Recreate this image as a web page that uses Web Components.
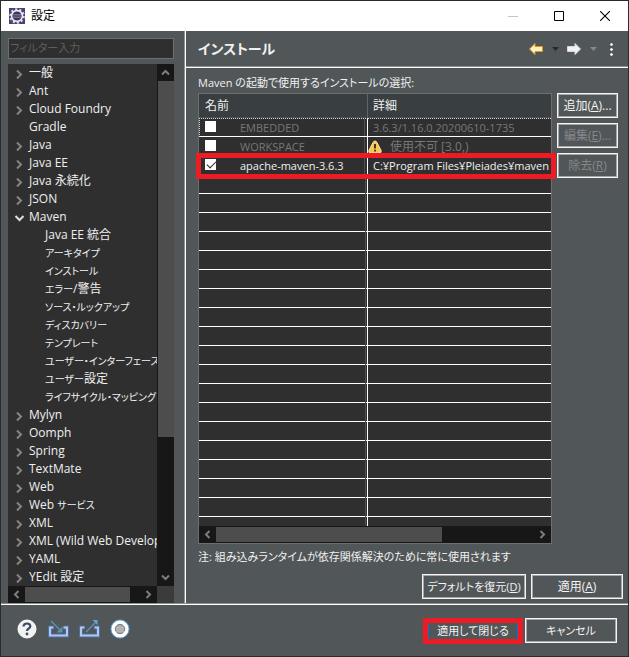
<!DOCTYPE html>
<html lang="ja">
<head>
<meta charset="utf-8">
<title>設定</title>
<style>
  body {
    margin: 0;
    background: #2b2b2b;
    color: #f0f0f0;
    font: 12px/18px "Open Sans", "Noto Sans CJK JP", sans-serif;
    font-feature-settings: "palt";
  }
</style>
</head>
<body>
<preferences-window></preferences-window>
<script>
const define = (name, html, setup) => {
  const tpl = document.createElement('template');
  tpl.innerHTML = '<style>*{box-sizing:border-box}:host{box-sizing:border-box}</style>' + html;
  customElements.define(name, class extends HTMLElement {
    constructor() {
      super();
      this.attachShadow({ mode: 'open' }).append(tpl.content.cloneNode(true));
    }
    connectedCallback() { if (setup) setup(this, this.shadowRoot); }
  });
};

/* Title bar with application icon and window controls */
define('title-bar', `
<style>
  :host { display: flex; align-items: center; height: 30px; background: #fff; color: #000; padding-left: 8px; }
  .name { flex: 1; margin-left: 6px; }
  button { width: 46px; height: 30px; border: 0; padding: 0; background: none; display: grid; place-items: center; }
</style>
<svg width="16" height="16" viewBox="0 0 16 16">
  <rect width="16" height="16" fill="#4c3d77"/>
  <circle cx="8" cy="8" r="6.8" fill="none" stroke="#d8d4e2" stroke-width="2" stroke-dasharray="2.2 2.07"/>
  <circle cx="8" cy="8" r="5.4" fill="#3c3558" stroke="#eeecf2" stroke-width="1.6"/>
  <path d="M4 6.5h8M3.6 8h8.8M4 9.5h8" stroke="#8b88a8" stroke-width=".7"/>
</svg>
<span class="name"><slot></slot></span>
<button aria-label="最小化"><svg width="10" height="10"><path d="M0 5.5h10" stroke="#c4c4c4"/></svg></button>
<button aria-label="最大化"><svg width="10" height="10"><path d="M.5.5h9v9h-9z" fill="none" stroke="#000"/></svg></button>
<button aria-label="閉じる"><svg width="10" height="10"><path d="M0 0l10 10M10 0L0 10" stroke="#000" stroke-width="1.1"/></svg></button>
`);

/* Scroll bar: size = thumb share of the track in percent */
define('scroll-bar', `
<style>
  :host { display: flex; background: #171717; width: 17px; flex-direction: column; }
  :host([horizontal]) { width: auto; height: 17px; flex-direction: row; }
  button { flex: none; width: 17px; height: 17px; padding: 0; border: 0; background: none; display: grid; place-items: center; }
  .track { flex: 1; display: flex; flex-direction: inherit; padding: 0 0 0 1px; }
  :host([horizontal]) .track { padding: 1px 0; }
  .thumb { background: #4d4d4d; flex: none; }
  path { fill: none; stroke: #7d7d7d; stroke-width: 2; }
  :host([horizontal]) svg { transform: rotate(-90deg); }
</style>
<button aria-label="戻る"><svg width="9" height="9"><path d="M1 6.5l3.500-3.500 3.500 3.500"/></svg></button>
<div class="track"><div class="thumb"></div></div>
<button aria-label="進む"><svg width="9" height="9"><path d="M1 2.500l3.500 3.500 3.500-3.500"/></svg></button>
`, (el, root) => {
  const side = el.hasAttribute('horizontal') ? 'width' : 'height';
  root.querySelector('.thumb').style[side] = el.getAttribute('size') + '%';
});

/* Framed push button */
define('push-button', `
<style>
  :host { display: block; }
  button { width: 100%; height: 25px; padding: 0; border: 1px solid #f4f4f4; outline: 1px solid #a6a6a6; outline-offset: -2px;
    background: #515658; color: #f4f4f4; font: inherit; font-feature-settings: inherit; white-space: nowrap; }
  button:disabled { color: #85888a; }
  :host([compact]) { font-size: 11px; }
  :host([primary]) button { display: block; border: solid #0a74d1; border-width: 0 1px; outline: 0; height: 16px; line-height: 16px; }
  :host([primary]) { border: 5px solid #ed1c24; }
</style>
<button><slot></slot></button>
`, (el, root) => { root.querySelector('button').disabled = el.hasAttribute('disabled'); });

/* One line of the category tree: state = open | closed | leaf */
define('tree-row', `
<style>
  :host { display: flex; align-items: center; height: 18px; padding-left: 7px; white-space: nowrap; }
  :host([level="2"]) { padding-left: 23px; }
  svg { width: 9px; height: 9px; margin: 2px 5px 0 0; flex: none; }
  path { fill: none; stroke: #858585; stroke-width: 2; display: none; }
  :host([state="closed"]) .closed { display: inline; }
  :host([state="open"]) .open { display: inline; stroke: #dcdcdc; }
  span { line-height: 18px; }
  ::slotted(small) { font-size: 10px; }
</style>
<svg viewBox="0 0 9 9"><path class="closed" d="M2 .5l4 4-4 4"/><path class="open" d="M.5 2l4 4 4-4"/></svg><span><slot></slot></span>
`, el => {
  el.setAttribute('role', 'treeitem');
});

/* Filter box above the category tree */
define('category-pane', `
<style>
  :host { display: flex; flex-direction: column; padding: 7px 11px 1px 7px; border-right: 1px solid #fff; box-shadow: inset -1px 0 #8e9090; }
  input { width: 100%; height: 21px; border: 1px solid #6e6e6e; background: #2f2f2f; color: #f0f0f0; font: inherit; font-size: 11px;
    font-feature-settings: inherit; padding: 0 1px 3px; margin: 0 0 5px; border-radius: 0; outline: 0; }
  input::placeholder { color: #5e5e5e; opacity: 1; }
  .box { flex: 1; display: grid; grid-template: minmax(0,1fr) 17px / minmax(0,1fr) 17px; background: #3b3b3b; }
  .tree { background: #2f2f2f; overflow: hidden; }
</style>
<input type="text" placeholder="フィルター入力" aria-label="フィルター入力">
<div class="box">
  <div class="tree" role="tree"></div>
  <scroll-bar size="73"></scroll-bar>
  <scroll-bar horizontal size="91"></scroll-bar>
</div>
`, (el, root) => {
  const kids = ['Java EE 統合', 'アーキタイプ', 'インストール', 'エラー/警告', 'ソース・ルックアップ', 'ディスカバリー', 'テンプレート', 'ユーザー・インターフェース', 'ユーザー設定', 'ライフサイクル・マッピング'];
  const top = ['一般', 'Ant', 'Cloud Foundry', 'Gradle', 'Java', 'Java EE', 'Java 永続化', 'JSON', 'Maven', 'Mylyn', 'Oomph', 'Spring', 'TextMate', 'Web', 'Web サービス', 'XML', 'XML (Wild Web Develop', 'YAML', 'YEdit 設定'];
  const tree = root.querySelector('.tree');
  const add = (text, state, level) => {
    const row = document.createElement('tree-row');
    row.setAttribute('state', state);
    row.setAttribute('level', level);
    /* katakana runs are set smaller than kanji and Latin */
    row.innerHTML = text.replace(/[\u30a0-\u30ff]+/g, '<small>$&</small>');
    tree.append(row);
  };
  for (const t of top) {
    add(t, t === 'Gradle' ? 'leaf' : t === 'Maven' ? 'open' : 'closed', 1);
    if (t === 'Maven') kids.forEach(k => add(k, 'leaf', 2));
  }
});

/* Page heading with history navigation */
define('page-header', `
<style>
  :host { display: flex; align-items: center; height: 37px; padding: 0 8px 0 12px; border-bottom: 1px solid #fff; box-shadow: inset 0 -1px #8e9090; }
  h1 { flex: 1; margin: 0; font-size: 14px; line-height: 20px; font-weight: 700; }
  button { border: 0; background: none; padding: 0; height: 20px; display: grid; place-items: center; }
  .arrow { width: 18px; } .drop { width: 20px; } .more { width: 17px; }
</style>
<h1><slot></slot></h1>
<button class="arrow" aria-label="戻る"><svg width="16" height="14"><path d="M1.500 7L7 1.500v3h7.500v5H7v3z" fill="#fff3c0" stroke="#dc9620" stroke-linejoin="round"/></svg></button>
<button class="drop" aria-label="戻る履歴"><svg width="7" height="4"><path d="M0 0h7L3.500 4z" fill="#292929"/></svg></button>
<button class="arrow" aria-label="進む"><svg width="16" height="14"><path d="M14.500 7L9 1.500v3H1.500v5H9v3z" fill="#f2f2f2" stroke="#d8d8d8" stroke-linejoin="round"/></svg></button>
<button class="drop" aria-label="進む履歴"><svg width="7" height="4"><path d="M0 0h7L3.500 4z" fill="#85888a"/></svg></button>
<button class="more" aria-label="メニュー"><svg width="5" height="15" fill="#fff" stroke="#303030" stroke-width=".5"><circle cx="2.500" cy="2.500" r="1.700"/><circle cx="2.500" cy="7.500" r="1.700"/><circle cx="2.500" cy="12.500" r="1.700"/></svg></button>
`);

/* Table of Maven runtimes */
define('runtime-table', `
<style>
  :host { display: flex; flex-direction: column; border: 1px solid #6e6e6e; background: #2f2f2f; position: relative; min-width: 0; }
  table { width: 100%; border-collapse: separate; border-spacing: 0; table-layout: fixed; }
  col.name { width: 169px; }
  th { height: 24px; padding: 0 0 0 5px; text-align: left; font-weight: 400; background: #393e40; border-bottom: 1px solid #4b4f51; }
  th:first-child { border-right: 1px solid #606466; padding-left: 6px; }
  td { height: 19px; padding: 2px 0 0 5px; font-size: 11px; line-height: 16px; white-space: nowrap; overflow: hidden; border-bottom: 1px solid #fff; }
  td:first-child { border-right: 1px solid #fff; box-shadow: inset -2px 0 #2f2f2f, inset -3px 0 #4b4f51; padding-left: 6px; }
  tr.off td { color: #777; }
  label { display: flex; align-items: center; }
  input { appearance: none; width: 11px; height: 11px; margin: 0 24px 4px 0; background: #fff; flex: none; }
  input:checked { display: grid; }
  input:checked::after { content: ""; width: 8px; height: 4px; margin: 2px; border: solid #222; border-width: 0 0 1px 1px; rotate: -45deg; }
  tr.focus td { border-top: 1px dotted #ddd; padding-top: 1px; }
  tr.focus td:first-child { border-left: 1px dotted #ddd; padding-left: 5px; }
  .warn { display: flex; align-items: center; gap: 8px; margin-left: -5px; font-size: 12px; }
  .rest { flex: 1; background: linear-gradient(90deg, #0000 166px, #4b4f51 166px 167px, #0000 167px 168px, #fff 168px 169px, #0000 169px),
    repeating-linear-gradient(#0000 0 18px, #fff 18px 19px); }
  .mark { position: absolute; left: -3px; right: -5px; top: 59px; height: 26px; border: 5px solid #ed1c24; pointer-events: none; }
</style>
<table>
  <colgroup><col class="name"><col></colgroup>
  <thead><tr><th>名前</th><th>詳細</th></tr></thead>
  <tbody>
    <tr class="off focus"><td><label><input type="checkbox">EMBEDDED</label></td><td>3.6.3/1.16.0.20200610-1735</td></tr>
    <tr class="off"><td><label><input type="checkbox">WORKSPACE</label></td><td><div class="warn"><svg width="14" height="14" viewBox="0 0 14 14"><path d="M7 1Q8.200 1 8.800 2.200L13.200 10.500Q13.500 13 11.800 13H2.200Q.5 13 .8 10.500L5.200 2.200Q5.800 1 7 1z" fill="#f8c750" stroke="#f8e2b0"/><path d="M7 4v4.500M7 9.700v1.800" stroke="#3a2a10" stroke-width="1.800"/></svg><span>使用不可 [3.0,)</span></div></td></tr>
    <tr><td><label><input type="checkbox" checked>apache-maven-3.6.3</label></td><td>C:¥Program Files¥Pleiades¥maven</td></tr>
  </tbody>
</table>
<div class="rest"></div>
<scroll-bar horizontal size="71"></scroll-bar>
<div class="mark"></div>
`);

/* Bottom bar */
define('dialog-footer', `
<style>
  :host { display: flex; align-items: center; height: 52px; padding: 0 11px 0 16px; border-top: 1px solid #fff; box-shadow: 0 -1px #8e9090; }
  .icons { flex: 1; display: flex; gap: 10px; padding-bottom: 3px; }
  .icons button { width: 21px; height: 20px; padding: 0; border: 0; background: none; }
  svg { display: block; }
  push-button { width: 92px; margin-left: 2px; }
  push-button[primary] { width: 100px; margin: 0; }
</style>
<div class="icons">
  <button aria-label="ヘルプ"><svg width="20" height="20"><circle cx="10" cy="10" r="9" fill="#f2f2f0" stroke="#fff"/><path d="M6.500 7.500Q6.700 4.500 10 4.500T13.300 7.300Q13.300 8.600 11.700 9.500T10 12" fill="none" stroke="#3c4a66" stroke-width="2.200"/><circle cx="10" cy="15" r="1.400" fill="#3c4a66"/></svg></button>
  <button aria-label="インポート"><svg width="21" height="20"><path d="M5.500 8.500H2V16.500H19V8.500H15.500" fill="none" stroke="#4a6da8" stroke-width="4"/><path d="M5.500 8.500H2V16.500H19V8.500H15.500" fill="none" stroke="#b4c8e8" stroke-width="2"/><path d="M3 2l9 9" stroke="#5594b8" stroke-width="1.400"/><path d="M14.500 7.500v6h-6z" fill="#5594b8"/></svg></button>
  <button aria-label="エクスポート"><svg width="21" height="20"><path d="M5.500 8.500H2V16.500H19V8.500H15.500" fill="none" stroke="#4a6da8" stroke-width="4"/><path d="M5.500 8.500H2V16.500H19V8.500H15.500" fill="none" stroke="#b4c8e8" stroke-width="2"/><path d="M7 13L17 3" stroke="#5594b8" stroke-width="1.400"/><path d="M13.500 1h5v5z" fill="#6aa6c8"/></svg></button>
  <button aria-label="記録"><svg width="20" height="20"><circle cx="10" cy="10" r="9" fill="#fff" stroke="#6fb0e4"/><circle cx="10" cy="10" r="4.700" fill="#aaa" stroke="#777"/><path d="M6 8.500h8M6 10.500h8M6 12.500h8" stroke="#c4c4c4" stroke-width=".7"/></svg></button>
</div>
<push-button primary compact>適用して閉じる</push-button>
<push-button compact>キャンセル</push-button>
`);

define('preferences-window', `
<style>
  :host { display: flex; flex-direction: column; min-height: 100vh; padding: 1px; }
  main { flex: 1; display: grid; grid-template-columns: 185px minmax(0,1fr); background: #515658; }
  dialog-footer { background: #515658; }
  .page { display: flex; flex-direction: column; min-width: 0; }
  .body { flex: 1; display: grid; grid-template: auto minmax(0,1fr) auto / minmax(0,1fr) 61px; column-gap: 5px; padding: 4px 10px 0 12px; }
  p { margin: 0; grid-column: 1 / -1; font-size: 11px; }
  .top { line-height: 21px; }
  .note { line-height: 26px; }
  .side { display: flex; flex-direction: column; gap: 5px; }
  .actions { display: flex; justify-content: flex-end; gap: 5px; padding: 4px 5px 5px; }
  .restore { width: 104px; } .apply { width: 92px; }
</style>
<title-bar>設定</title-bar>
<main>
  <category-pane></category-pane>
  <div class="page">
    <page-header>インストール</page-header>
    <div class="body">
      <p class="top">Maven の起動で使用するインストールの選択:</p>
      <runtime-table></runtime-table>
      <div class="side">
        <push-button>追加(<u>A</u>)...</push-button>
        <push-button disabled>編集(<u>E</u>)...</push-button>
        <push-button disabled>除去(<u>R</u>)</push-button>
      </div>
      <p class="note">注: 組み込みランタイムが依存関係解決のために常に使用されます</p>
    </div>
    <div class="actions">
      <push-button compact class="restore">デフォルトを復元(<u>D</u>)</push-button>
      <push-button class="apply">適用(<u>A</u>)</push-button>
    </div>
  </div>
</main>
<dialog-footer></dialog-footer>
`);
</script>
</body>
</html>
